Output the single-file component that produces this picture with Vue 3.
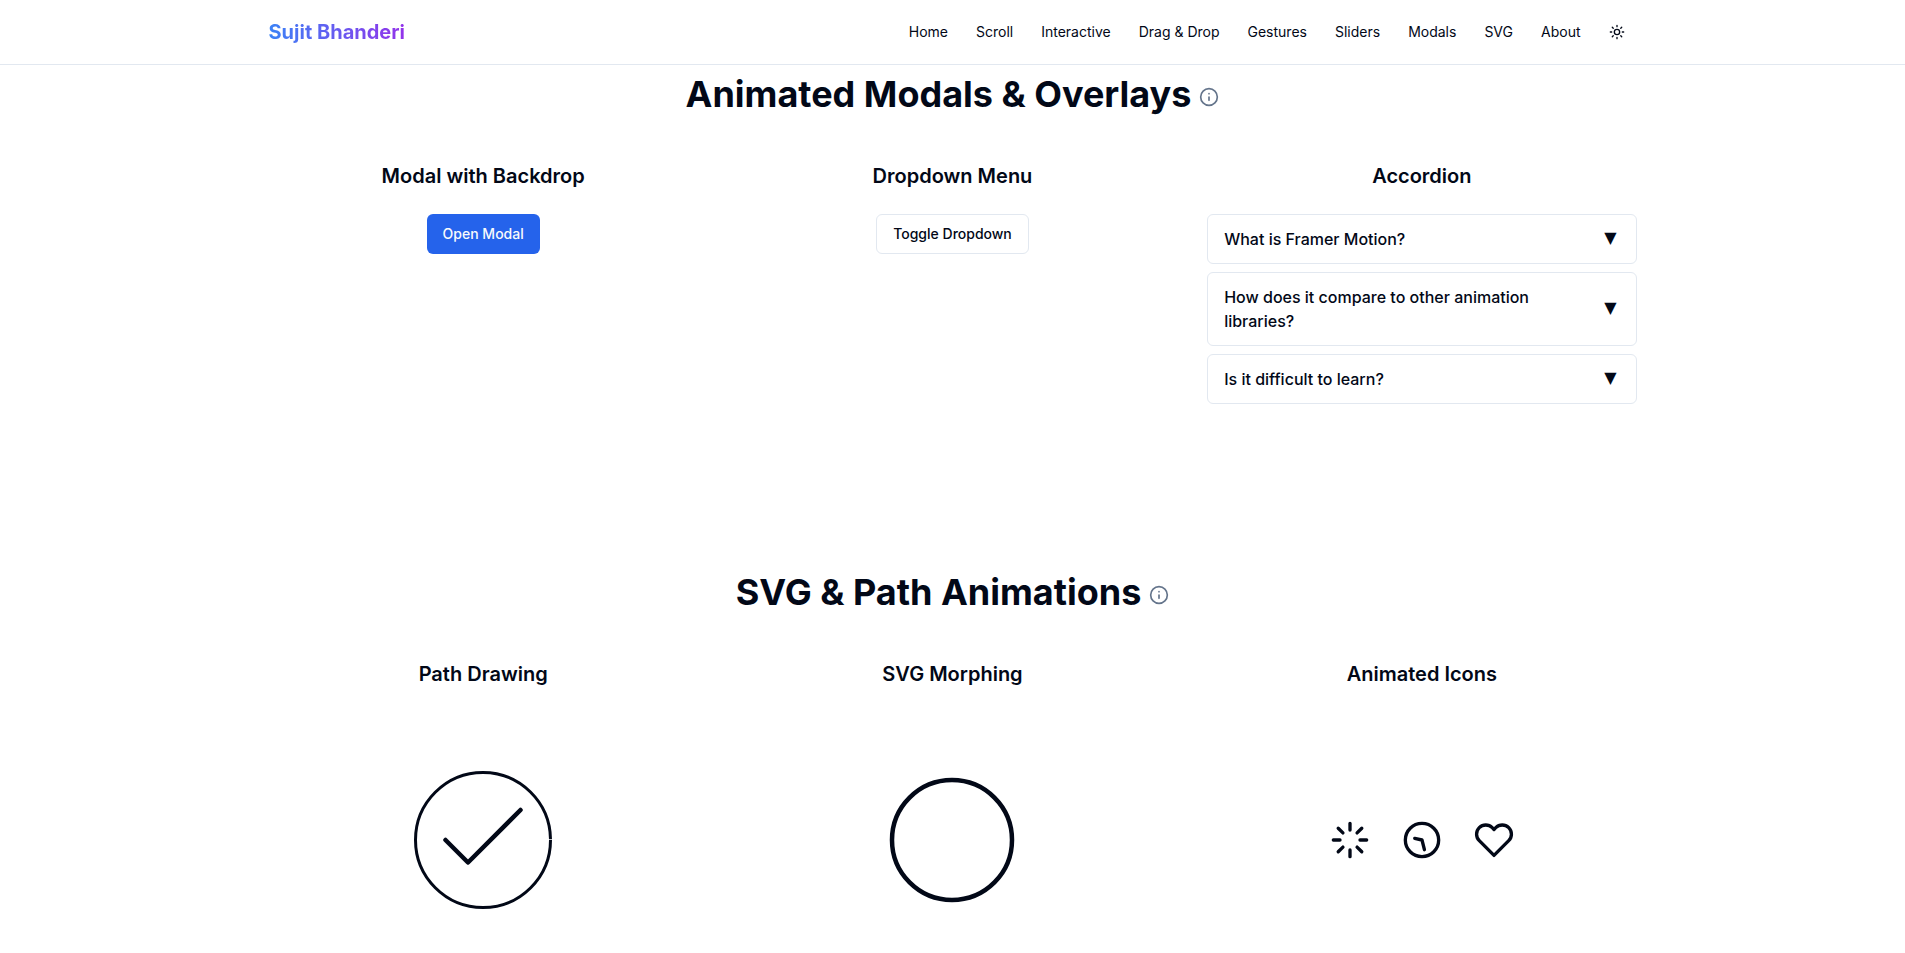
<script setup>
import { ref } from 'vue'

const links = ['Home', 'Scroll', 'Interactive', 'Drag & Drop', 'Gestures', 'Sliders', 'Modals', 'SVG', 'About']
const questions = ref([
  'What is Framer Motion?',
  'How does it compare to other animation libraries?',
  'Is it difficult to learn?',
])
</script>

<template>
  <div class="page">
    <header class="header">
      <div class="container bar">
        <span class="logo">Sujit Bhanderi</span>
        <nav class="nav">
          <a v-for="l in links" :key="l">{{ l }}</a>
          <button class="theme" aria-label="Toggle theme">
            <svg class="sun" viewBox="0 0 24 24">
              <circle cx="12" cy="12" r="4" />
              <path d="M12 2v2M12 20v2M4.93 4.93l1.41 1.41M17.66 17.66l1.41 1.41M2 12h2M20 12h2M6.34 17.66l-1.41 1.41M19.07 4.93l-1.41 1.41" />
            </svg>
          </button>
        </nav>
      </div>
    </header>

    <section class="container section modals">
      <div class="title">
        <h2>Animated Modals &amp; Overlays</h2>
        <svg class="info" viewBox="0 0 24 24"><circle cx="12" cy="12" r="10" /><path d="M12 16v-4M12 8h.01" /></svg>
      </div>
      <div class="grid">
        <div class="col">
          <h3>Modal with Backdrop</h3>
          <button class="btn primary">Open Modal</button>
        </div>
        <div class="col">
          <h3>Dropdown Menu</h3>
          <button class="btn outline">Toggle Dropdown</button>
        </div>
        <div class="col">
          <h3>Accordion</h3>
          <div class="accordion">
            <button v-for="q in questions" :key="q" class="item">
              <span class="question">{{ q }}</span>
              <span class="arrow">▼</span>
            </button>
          </div>
        </div>
      </div>
    </section>

    <section class="container section">
      <div class="title">
        <h2>SVG &amp; Path Animations</h2>
        <svg class="info" viewBox="0 0 24 24"><circle cx="12" cy="12" r="10" /><path d="M12 16v-4M12 8h.01" /></svg>
      </div>
      <div class="grid">
        <div class="col">
          <h3>Path Drawing</h3>
          <div class="stage">
            <svg class="figure" viewBox="0 0 100 100">
              <circle class="ring" cx="50" cy="50" r="45" pathLength="1" />
              <path class="tick" d="M25 50L40 65L75 30" />
            </svg>
          </div>
        </div>
        <div class="col">
          <h3>SVG Morphing</h3>
          <div class="stage">
            <svg class="figure" viewBox="0 0 100 100">
              <circle class="blob" cx="50" cy="50" r="40" />
            </svg>
          </div>
        </div>
        <div class="col">
          <h3>Animated Icons</h3>
          <div class="stage icons">
            <svg class="icon" viewBox="0 0 24 24">
              <path d="M12 2v4M12 18v4M4.93 4.93l2.83 2.83M16.24 16.24l2.83 2.83M2 12h4M18 12h4M4.93 19.07l2.83-2.83M16.24 7.76l2.83-2.83" />
            </svg>
            <svg class="icon" viewBox="0 0 24 24">
              <circle cx="12" cy="12" r="10" />
              <path d="M12 6v6l4 2" transform="rotate(166 12 12)" />
            </svg>
            <svg class="icon" viewBox="0 0 24 24">
              <path d="M20.84 4.61a5.5 5.5 0 0 0-7.78 0L12 5.67l-1.06-1.06a5.5 5.5 0 0 0-7.78 7.78l1.06 1.06L12 21.23l7.78-7.78 1.06-1.06a5.5 5.5 0 0 0 0-7.78z" />
            </svg>
          </div>
        </div>
      </div>
    </section>
  </div>
</template>

<style>
html,
body {
  margin: 0;
  height: 100%;
  overflow: hidden;
}
</style>

<style scoped>
.page {
  height: 953px;
  overflow: hidden;
  background: #fff;
  color: #020817;
  font-family: Inter, "Liberation Sans", sans-serif;
  font-size: 16px;
  line-height: 24px;
}
.container {
  box-sizing: border-box;
  width: 100%;
  max-width: 1400px;
  margin: 0 auto;
  padding: 0 16px;
}
.header {
  border-bottom: 1px solid #e2e8f0;
}
.bar {
  display: flex;
  align-items: center;
  justify-content: space-between;
  height: 64px;
}
.logo {
  font-size: 20px;
  line-height: 28px;
  font-weight: 700;
  background: linear-gradient(to right, #3b82f6, #9333ea);
  -webkit-background-clip: text;
  background-clip: text;
  color: transparent;
}
.nav {
  display: flex;
  align-items: center;
  gap: 28px;
  padding-right: 12px;
  font-size: 14px;
  line-height: 20px;
}
.theme {
  display: flex;
  padding: 0;
  border: 0;
  background: none;
  color: inherit;
}
svg {
  display: block;
  flex: none;
  fill: none;
  stroke: currentColor;
  stroke-width: 2;
  stroke-linecap: round;
  stroke-linejoin: round;
}
.sun {
  width: 16px;
  height: 16px;
}
.section {
  padding-top: 9px;
}
.modals {
  height: 498px;
}
.title {
  display: flex;
  justify-content: center;
  gap: 8px;
  margin-bottom: 48px;
}
.title h2 {
  margin: 0;
  font-size: 36px;
  line-height: 40px;
  font-weight: 700;
}
.info {
  width: 20px;
  height: 20px;
  margin-top: 13px;
  color: #64748b;
}
.grid {
  display: grid;
  grid-template-columns: repeat(3, 1fr);
  gap: 40px;
}
.col {
  display: flex;
  flex-direction: column;
  align-items: center;
}
.col h3 {
  margin: 0 0 24px;
  font-size: 20px;
  line-height: 28px;
  font-weight: 600;
}
.btn {
  box-sizing: border-box;
  height: 40px;
  padding: 0 16px;
  border: 0;
  border-radius: 6px;
  font: 500 14px/20px Inter, "Liberation Sans", sans-serif;
}
.primary {
  background: #2563eb;
  color: #f8fafc;
}
.outline {
  border: 1px solid #e2e8f0;
  background: #fff;
  color: #020817;
}
.accordion {
  display: flex;
  flex-direction: column;
  gap: 8px;
  width: 100%;
}
.item {
  display: flex;
  align-items: center;
  justify-content: space-between;
  padding: 12px 16px;
  border: 1px solid #e2e8f0;
  border-radius: 6px;
  background: #fff;
  color: #020817;
  font: 500 16px/24px Inter, "Liberation Sans", sans-serif;
  text-align: left;
}
.question {
  max-width: 360px;
}
.arrow {
  padding: 0 3px 2px 0;
  line-height: 22px;
  font-family: "DejaVu Sans", sans-serif;
}
.stage {
  display: flex;
  align-items: center;
  justify-content: center;
  height: 256px;
}
.figure {
  width: 150px;
  height: 150px;
}
.ring {
  stroke-width: 2;
  stroke-linecap: butt;
  stroke-dasharray: 0.998 1;
}
.tick,
.blob {
  stroke-width: 3;
}
.icons {
  gap: 32px;
}
.icon {
  width: 40px;
  height: 40px;
  margin-bottom: 1px;
}
</style>
